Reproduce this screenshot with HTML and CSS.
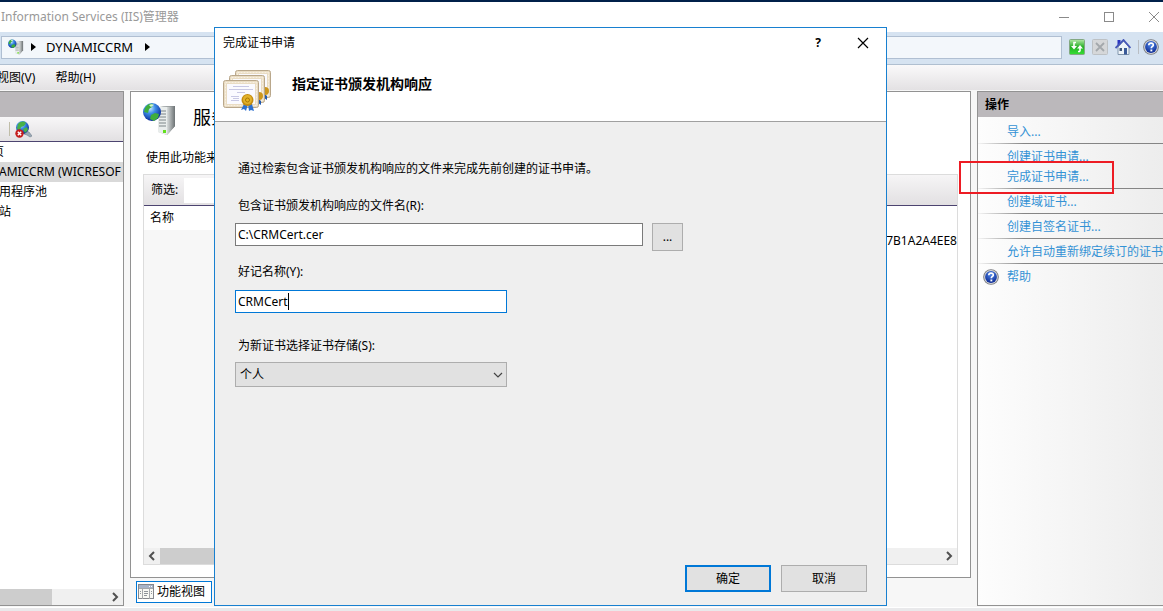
FILE: index.html
```html
<!DOCTYPE html>
<html lang="zh-CN">
<head>
    <meta charset="UTF-8">
    <meta name="viewport" content="width=device-width, initial-scale=1.0">
    <title>Information Services (IIS)管理器</title>
    <link rel="stylesheet" href="styles.css">
</head>
<body>
    <svg class="defs" width="0" height="0" aria-hidden="true">
        <defs>
            <radialGradient id="globe" cx="0.4" cy="0.3" r="0.7">
                <stop offset="0" stop-color="#c8e8ff"/>
                <stop offset="0.4" stop-color="#3f8fe8"/>
                <stop offset="1" stop-color="#0a2a9a"/>
            </radialGradient>
            <linearGradient id="metal">
                <stop offset="0" stop-color="#d8dcdc"/>
                <stop offset="1" stop-color="#6c7274"/>
            </linearGradient>
            <linearGradient id="green" x2="0" y2="1">
                <stop offset="0" stop-color="#b5e8a8"/>
                <stop offset="0.5" stop-color="#25b025"/>
                <stop offset="1" stop-color="#35e035"/>
            </linearGradient>
            <radialGradient id="blue" cx="0.5" cy="0.3" r="0.7">
                <stop offset="0" stop-color="#4f86e8"/>
                <stop offset="1" stop-color="#0c2a94"/>
            </radialGradient>
            <symbol id="server" viewBox="0 0 34 34">
                <path d="M16 5 20 4h12v20l-8 9-9-3z" fill="url(#metal)"/>
                <path d="M16 5h8v28l-9-3z" fill="#e9edec"/>
                <path d="M24 5 32 4v20l-8 9z" fill="url(#metal)"/>
                <path d="M16 9h7M16 12h7M16 15h7M16 18h7M16 21h7M16 24h7" stroke="#7d8588"/>
                <rect x="20" y="28" width="3" height="3" fill="#63e01c"/>
                <circle cx="9" cy="10" r="9" fill="url(#globe)"/>
                <path d="M2 6c2-4 5-5 8-4l-1 3-3 2-1 4-4-1zM8 13l4-2 4 1-1 4-4 3-4-2z" fill="#3fae3c"/>
                <path d="M6 3c2-1 4-1 5 0l-3 2z" fill="#d6f4d0"/>
            </symbol>
            <symbol id="help" viewBox="0 0 16 16">
                <circle cx="8" cy="8" r="7.8" fill="#77787c"/>
                <circle cx="8" cy="8" r="6.9" fill="#d4d6da"/>
                <circle cx="8" cy="8" r="5.9" fill="url(#blue)"/>
                <path d="M5.8 6.3c0-3 4.5-2.8 4.5-.4 0 1.6-2 1.5-2 3.4" fill="none" stroke="#fff" stroke-width="1.7"/>
                <rect x="7.4" y="10.5" width="1.9" height="1.9" fill="#fff"/>
            </symbol>
            <symbol id="certificate" viewBox="0 0 36 28">
                <rect x="0.5" y="0.5" width="35" height="27" rx="2" fill="#e9dcc3" stroke="#b9a78b"/>
                <rect x="2.5" y="2.5" width="31" height="23" fill="none" stroke="#f8f1e2" stroke-dasharray="2 1"/>
                <rect x="4" y="4" width="28" height="20" fill="#fafaff"/>
            </symbol>
        </defs>
    </svg>

    <header class="title-bar">
        <span>Information Services (IIS)管理器</span>
        <div class="window-controls">
            <button aria-label="最小化"><svg width="12" height="12"><path d="M1 6.5h10" stroke="#8a8a8a"/></svg></button>
            <button aria-label="最大化"><svg width="12" height="12"><rect x="1.5" y="1.5" width="9" height="9" fill="none" stroke="#8a8a8a"/></svg></button>
            <button aria-label="关闭"><svg width="12" height="12"><path d="M1 1l10 10M11 1 1 11" stroke="#8a8a8a"/></svg></button>
        </div>
    </header>

    <nav class="address-bar">
        <div class="address">
            <svg width="16" height="16"><use href="#server"/></svg>
            <svg class="arrow" width="5" height="8"><path d="M0 0l5 4-5 4z"/></svg>
            <span>DYNAMICCRM</span>
            <svg class="arrow" width="5" height="8"><path d="M0 0l5 4-5 4z"/></svg>
        </div>
        <div class="tools">
            <button aria-label="刷新"><svg width="16" height="16" viewBox="0 0 16 16">
                <rect x="0.5" y="0.5" width="15" height="15" rx="1" fill="url(#green)" stroke="#82a882"/>
                <path d="M7 3.5H5V8M11 12.5V8M9 12.5h2" fill="none" stroke="#fff" stroke-width="1.6"/>
                <path d="M2 7h6l-3 3.5zM8 9.5h6L11 6z" fill="#fff"/>
            </svg></button>
            <button aria-label="停止"><svg width="16" height="16" viewBox="0 0 16 16">
                <rect x="0.5" y="0.5" width="15" height="15" rx="1" fill="#d5d7d9" stroke="#bdc1c4"/>
                <path d="M4 4l8 8M12 4l-8 8" stroke="#a3a8ac" stroke-width="1.8"/>
            </svg></button>
            <button aria-label="主页"><svg width="16" height="16" viewBox="0 0 16 16">
                <path d="M3 8l5.5-6L14 8v7.5H3z" fill="#edf3f8" stroke="#8196ac"/>
                <path d="M2.5 1h3v4l-3 2z" fill="#2a35c0"/>
                <path d="M0.5 9 8.5 1l7 8" fill="none" stroke="#4657b8" stroke-width="1.8"/>
                <path d="M9 9h3v6.5H9z" fill="#3a5a98"/>
                <path d="M4.5 9H7v3H4.5z" fill="#41577a"/>
            </svg></button>
            <span class="divider"></span>
            <button aria-label="帮助"><svg width="16" height="16"><use href="#help"/></svg></button>
        </div>
    </nav>

    <div class="menu-bar">
        <button>视图(V)</button>
        <button>帮助(H)</button>
    </div>

    <main class="workspace">
        <section class="panel connections">
            <div class="panel-title"></div>
            <div class="connections-tools">
                <span class="divider"></span>
                <button aria-label="断开连接"><svg width="17" height="17" viewBox="0 0 17 17">
                    <path d="M10 10l4 1 3 4-2 1-3-2-3-1z" fill="#9aa8b4" stroke="#71808e" stroke-width="0.6"/>
                    <circle cx="7.5" cy="6.5" r="6.5" fill="url(#globe)"/>
                    <path d="M3 3c3-3 6-3 8-1L9 5 6 6 5 9 2 8zM8 8l4-2 1 3-3 3z" fill="#48b048"/>
                    <circle cx="4.5" cy="12.5" r="4.2" fill="#c41c1c"/>
                    <path d="M2.8 10.8l3.4 3.4M6.2 10.8l-3.4 3.4" stroke="#fff" stroke-width="1.4"/>
                </svg></button>
            </div>
            <ul class="tree">
                <li>页</li>
                <li class="selected">AMICCRM (WICRESOF</li>
                <li>用程序池</li>
                <li>站</li>
            </ul>
            <div class="scrollbar">
                <span class="thumb tree-thumb"></span>
                <svg width="16" height="16"><path d="M6 4l4 4-4 4" fill="none" stroke="#505050" stroke-width="2"/></svg>
            </div>
        </section>

        <section class="center">
            <div class="panel feature">
                <div class="feature-title">
                    <svg width="34" height="34"><use href="#server"/></svg>
                    <h1>服务</h1>
                </div>
                <p>使用此功能来</p>
                <div class="list-view">
                    <div class="filter">
                        <label for="filter">筛选:</label>
                        <input type="text" id="filter">
                    </div>
                    <table>
                        <tr><th>名称</th><th></th></tr>
                        <tr class="entry"><td></td><td><div class="hash">7B1A2A4EE8</div></td></tr>
                        <tr><td></td><td></td></tr>
                    </table>
                    <div class="scrollbar">
                        <svg width="16" height="16"><path d="M10 4 6 8l4 4" fill="none" stroke="#505050" stroke-width="2"/></svg>
                        <span class="thumb list-thumb"></span>
                        <svg width="16" height="16"><path d="M6 4l4 4-4 4" fill="none" stroke="#505050" stroke-width="2"/></svg>
                    </div>
                </div>
            </div>
            <button class="view-tab">
                <svg width="16" height="16" viewBox="0 0 16 16">
                    <rect x="0.5" y="0.5" width="15" height="14" fill="#f8f8f4" stroke="#85878c"/>
                    <path d="M1 1h14v3H1z" fill="#a8b4c8"/>
                    <path d="M11 2.5h1M13 2.5h1" stroke="#fff"/>
                    <path d="M4.5 4v11M11.5 4v11M1 4.5h14" stroke="#a6a8ac"/>
                    <path d="M6 7.5h4M6 9.5h4M6 11.5h3M2 7.5h1M2 9.5h1M13 7.5h1M13 9.5h1" stroke="#8f949a"/>
                </svg>
                功能视图
            </button>
        </section>

        <aside class="panel actions">
            <h2 class="panel-title">操作</h2>
            <div class="action-group"><a href="#">导入...</a></div>
            <div class="action-group">
                <a href="#">创建证书申请...</a>
                <a href="#">完成证书申请...</a>
            </div>
            <div class="action-group"><a href="#">创建域证书...</a></div>
            <div class="action-group"><a href="#">创建自签名证书...</a></div>
            <div class="action-group"><a href="#">允许自动重新绑定续订的证书</a></div>
            <div class="action-group last">
                <svg width="16" height="16"><use href="#help"/></svg>
                <a href="#">帮助</a>
            </div>
        </aside>
    </main>
    <footer class="status-bar"></footer>

    <form class="dialog" role="dialog" aria-labelledby="dialog-title">
        <div class="dialog-header">
            <div class="dialog-caption">
                <span id="dialog-title">完成证书申请</span>
                <div class="dialog-controls">
                    <button type="button">?</button>
                    <button type="button" aria-label="关闭"><svg width="12" height="12"><path d="M1 1l10 10M11 1 1 11" stroke="#000" stroke-width="1.2"/></svg></button>
                </div>
            </div>
            <div class="dialog-heading">
                <svg width="48" height="42" viewBox="0 0 48 42">
                    <use href="#certificate" x="12" y="0" width="36" height="28"/>
                    <path d="M40 23l4 3v4l-3-2z" fill="#1e58b0"/>
                    <circle cx="42" cy="21" r="4" fill="#cc961c"/>
                    <use href="#certificate" x="6" y="5" width="36" height="28"/>
                    <path d="M34 28l4 3v4l-3-2z" fill="#1e58b0"/>
                    <circle cx="36" cy="26" r="4" fill="#cc961c"/>
                    <use href="#certificate" x="0" y="10" width="36" height="28"/>
                    <path d="M10 16.5h16M6 19.5h24M14 22.5h8M8 26.5h8M8 30.5h8M10 28.5h6" stroke="#c8c8e4"/>
                    <path d="M21 34h4l-2 7-2-2-3 1zM25 34h4l2 7-3-1-2 1z" fill="#2c70d0"/>
                    <circle cx="24.5" cy="30" r="6" fill="#c48c10"/>
                    <circle cx="24.5" cy="29.5" r="4.5" fill="#e2b22c"/>
                    <circle cx="24.5" cy="30" r="2" fill="#e8b41e" stroke="#a87808"/>
                </svg>
                <h2>指定证书颁发机构响应</h2>
            </div>
        </div>
        <div class="dialog-body">
            <p>通过检索包含证书颁发机构响应的文件来完成先前创建的证书申请。</p>
            <label for="file">包含证书颁发机构响应的文件名(R):</label>
            <div class="file-row">
                <input type="text" id="file" value="C:\CRMCert.cer">
                <button type="button" class="browse">...</button>
            </div>
            <label for="friendly">好记名称(Y):</label>
            <div class="friendly-field">
                <input type="text" id="friendly" value="CRMCert">
                <span class="caret"></span>
            </div>
            <label for="store">为新证书选择证书存储(S):</label>
            <div class="select-field">
                <select id="store"><option>个人</option></select>
                <svg width="10" height="6"><path d="M1 1l4 4 4-4" fill="none" stroke="#444" stroke-width="1.2"/></svg>
            </div>
        </div>
        <div class="dialog-footer">
            <button type="submit" class="primary">确定</button>
            <button type="button">取消</button>
        </div>
    </form>

    <div class="highlight"></div>
</body>
</html>
```

FILE: styles.css
```css
* {
    box-sizing: border-box;
}

body {
    margin: 0;
    height: 100vh;
    display: flex;
    flex-direction: column;
    overflow: hidden;
    position: relative;
    border-top: 2px solid #00204a;
    background-color: #f7f7f7;
    color: #000;
    font-family: "Noto Sans", "Noto Sans CJK SC", sans-serif;
    font-size: 12px;
    line-height: 20px;
}

button, input, select {
    font: inherit;
    color: inherit;
    margin: 0;
    padding: 0;
    border: none;
    background: none;
    outline: none;
}

h1, h2, p, ul {
    margin: 0;
    padding: 0;
    font-size: 12px;
}

svg {
    display: block;
    flex-shrink: 0;
}

.defs {
    position: absolute;
}

.title-bar {
    height: 30px;
    display: flex;
    align-items: center;
    justify-content: space-between;
    padding-left: 1px;
    background-color: #fff;
    color: #999;
}

.window-controls {
    display: flex;
    gap: 33px;
    padding-right: 3px;
}

.address-bar {
    height: 33px;
    display: flex;
    align-items: center;
    gap: 7px;
    padding: 0 4px 2px 1px;
    background-color: #d6e3f1;
    border-bottom: 1px solid #b0bfd0;
}

.address {
    flex: 1;
    height: 23px;
    display: flex;
    align-items: center;
    gap: 7px;
    padding-left: 6px;
    border: 1px solid #b0bfd2;
    background-color: #f3f7fb;
}

.address span {
    padding: 0 5px 0 3px;
    font-size: 13px;
}

.tools {
    display: flex;
    align-items: center;
    gap: 7px;
}

.divider {
    width: 1px;
    height: 14px;
    background-color: #b9bec4;
}

.tools .divider {
    margin-right: -3px;
}

.menu-bar {
    height: 25px;
    display: flex;
    gap: 20px;
    margin-left: -3px;
    background: linear-gradient(#faf9fa, #e3e1e3);
}

.workspace {
    flex: 1;
    min-height: 0;
    display: flex;
    gap: 6px;
    padding: 1px 0;
}

.panel {
    border: 1px solid #929292;
    background-color: #fff;
    overflow: hidden;
}

.panel-title {
    height: 25px;
    padding-left: 7px;
    line-height: 25px;
    background-color: #bbb8bb;
}

.connections {
    width: 124px;
    flex-shrink: 0;
    display: flex;
    flex-direction: column;
    border-left: none;
}

.connections-tools {
    height: 25px;
    display: flex;
    align-items: center;
    gap: 5px;
    padding-left: 9px;
    border-bottom: 1px solid #4c4470;
    background: linear-gradient(#f8f7f8, #e2e0e2);
}

.connections-tools .divider {
    background-color: #c0bda8;
}

.tree {
    flex: 1;
    list-style: none;
}

.tree li {
    text-indent: -1px;
    white-space: nowrap;
    overflow: hidden;
}

.tree li:first-child {
    text-indent: -8px;
}

.tree .selected {
    background-color: #d9d9d9;
}

.scrollbar {
    height: 16px;
    display: flex;
    justify-content: space-between;
    background-color: #f0f0f0;
}

.thumb {
    background-color: #cdcdcd;
}

.tree-thumb {
    width: 52px;
}

.center {
    flex: 1;
    min-width: 0;
    display: flex;
    flex-direction: column;
    align-items: flex-start;
    gap: 3px;
    padding-bottom: 3px;
}

.feature {
    flex: 1;
    align-self: stretch;
    display: flex;
    flex-direction: column;
    padding: 10px 12px 12px;
}

.feature-title {
    display: flex;
    gap: 16px;
}

.feature-title h1 {
    font-size: 18px;
    font-weight: normal;
    line-height: 30px;
}

.feature p {
    padding: 12px 3px 6px;
}

.list-view {
    flex: 1;
    display: flex;
    flex-direction: column;
    border: 1px solid #dcdcdc;
}

.filter {
    height: 31px;
    display: flex;
    align-items: center;
    gap: 6px;
    padding-left: 7px;
    border-bottom: 1px solid #4c4470;
    background: linear-gradient(#f6f5f6, #e2e0e2);
}

.filter input {
    width: 200px;
    height: 25px;
    background-color: #fff;
}

.list-view table {
    flex: 1;
    width: 100%;
    border-collapse: collapse;
    table-layout: fixed;
}

.list-view th {
    height: 24px;
    padding: 0 6px;
    font-weight: normal;
    text-align: left;
}

.list-view td {
    padding: 0;
}

.list-view td:first-child {
    background-color: #f7f7f7;
}

.entry {
    height: 22px;
}

.hash {
    text-align: right;
}

.list-thumb {
    flex: 1;
    margin-right: 200px;
}

.view-tab {
    height: 22px;
    display: flex;
    align-items: center;
    gap: 3px;
    margin-left: 6px;
    padding: 0 6px 0 1px;
    border: 1px solid #0078d7;
    background-color: #fff;
}

.actions {
    width: 186px;
    flex-shrink: 0;
    border-right: none;
    background: linear-gradient(90deg, #fdfdfd, #ededed);
}

.actions .panel-title {
    margin-bottom: 2px;
}

.action-group {
    display: flex;
    flex-direction: column;
    padding: 3px 0 1px 29px;
    border-bottom: 1px solid;
    border-image: linear-gradient(90deg, #f7f7f7, #858585 25%) 1;
    white-space: nowrap;
}

.action-group a {
    color: #3392d5;
    text-decoration: none;
}

.action-group.last {
    flex-direction: row;
    align-items: center;
    gap: 8px;
    padding-left: 5px;
    border: none;
}

.status-bar {
    height: 4px;
    background-color: #e9e9eb;
    border-top: 1px solid #fff;
}

/* Dialog */
.dialog {
    position: absolute;
    top: 25px;
    left: 214px;
    width: 673px;
    height: 579px;
    display: flex;
    flex-direction: column;
    border: 1px solid #1880d0;
    background-color: #efefef;
}

.dialog-header {
    height: 94px;
    border-bottom: 1px solid #a0a0a0;
    background-color: #fff;
}

.dialog-caption {
    height: 30px;
    display: flex;
    align-items: center;
    justify-content: space-between;
    padding: 0 17px 0 8px;
}

.dialog-controls {
    display: flex;
    align-items: center;
    gap: 36px;
    font-weight: bold;
}

.dialog-heading {
    display: flex;
    gap: 21px;
    padding: 12px 8px;
}

.dialog-heading h2 {
    font-size: 14px;
    line-height: 28px;
}

.dialog-body {
    flex: 1;
    padding: 37px 20px 0;
}

.dialog-body p {
    padding: 0 3px 17px;
}

.dialog-body label {
    display: block;
    padding: 0 3px;
}

.dialog-body input {
    width: 100%;
    height: 23px;
    padding: 0 2px;
    border: 1px solid #7a7a7a;
    background-color: #fff;
}

.file-row {
    width: 448px;
    display: flex;
    align-items: flex-start;
    gap: 9px;
    margin: 7px 0 11px;
}

.dialog .browse {
    width: 31px;
    height: 28px;
    flex-shrink: 0;
    border: 1px solid #adadad;
    background-color: #e1e1e1;
}

.friendly-field {
    width: 272px;
    position: relative;
    margin: 8px 0 23px;
}

.dialog-body .friendly-field input {
    border-color: #0078d7;
}

.caret {
    position: absolute;
    top: 3px;
    left: 53px;
    width: 1px;
    height: 17px;
    background-color: #000;
}

.select-field {
    width: 272px;
    position: relative;
    margin-top: 6px;
}

.select-field select {
    width: 100%;
    height: 25px;
    padding-left: 4px;
    appearance: none;
    border: 1px solid #adadad;
    background-color: #e1e1e1;
}

.select-field svg {
    position: absolute;
    top: 10px;
    right: 4px;
    pointer-events: none;
}

.dialog-footer {
    display: flex;
    justify-content: flex-end;
    gap: 10px;
    padding: 0 19px 13px;
}

.dialog-footer button {
    width: 86px;
    height: 27px;
    border: 1px solid #adadad;
    background-color: #e1e1e1;
}

.dialog-footer .primary {
    border: 2px solid #0078d7;
}

.highlight {
    position: absolute;
    top: 159px;
    left: 959px;
    width: 155px;
    height: 33px;
    border: 2px solid #ed1c24;
    pointer-events: none;
}
```
